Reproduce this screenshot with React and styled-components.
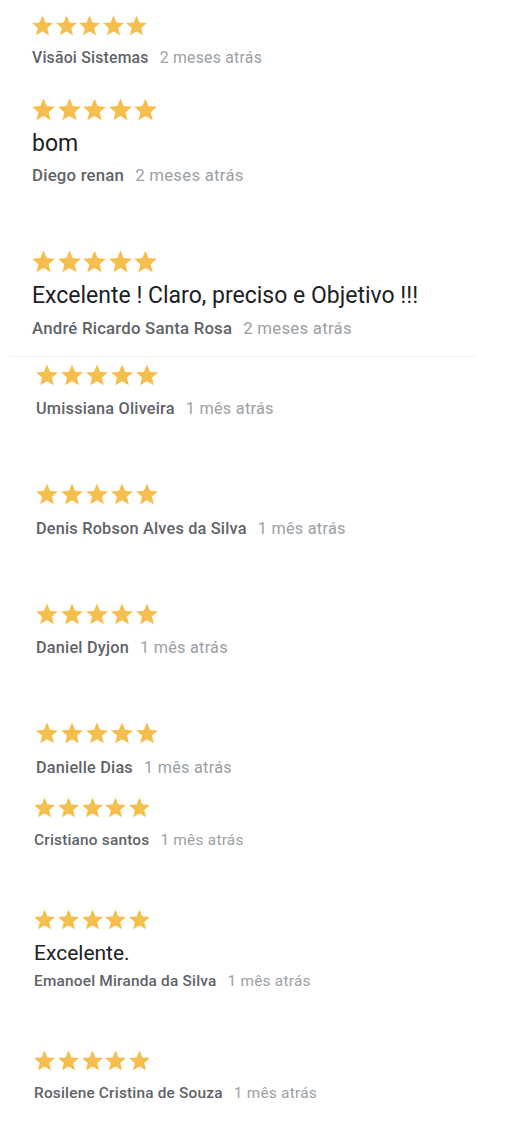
import React from "react";
import styled, { createGlobalStyle } from "styled-components";

const GlobalStyle = createGlobalStyle`
  html, body {
    margin: 0;
    padding: 0;
    background: #ffffff;
  }
  body {
    font-family: Roboto, "Liberation Sans", Arial, sans-serif;
    -webkit-font-smoothing: antialiased;
  }
`;

const reviews = [
  { name: "Visãoi Sistemas", time: "2 meses atrás", indent: 32, star: 21, gap: 2.5, mt: 15, nameSize: 15.8, nameMt: 11.5 },
  { name: "Diego renan", time: "2 meses atrás", text: "bom", indent: 32, star: 23, gap: 2.5, mt: 30.5, textSize: 23, textLh: 28, textMt: 9, nameSize: 16.8, nameMt: 7.2 },
  { name: "André Ricardo Santa Rosa", time: "2 meses atrás", text: "Excelente ! Claro, preciso e Objetivo !!!", indent: 32, star: 23, gap: 2.5, mt: 65, textSize: 23, textLh: 28, textMt: 8.8, nameSize: 16.8, nameMt: 8, divider: true },
  { name: "Umissiana Oliveira", time: "1 mês atrás", indent: 36, star: 22, gap: 3, mt: 7, nameSize: 16.3, nameMt: 13.5 },
  { name: "Denis Robson Alves da Silva", time: "1 mês atrás", indent: 36, star: 22, gap: 3, mt: 64, nameSize: 16.3, nameMt: 13.5 },
  { name: "Daniel Dyjon", time: "1 mês atrás", indent: 36, star: 22, gap: 3, mt: 64, nameSize: 16.3, nameMt: 13.5 },
  { name: "Danielle Dias", time: "1 mês atrás", indent: 36, star: 22, gap: 3, mt: 64, nameSize: 16.3, nameMt: 13.5 },
  { name: "Cristiano santos", time: "1 mês atrás", indent: 34, star: 21, gap: 2.75, mt: 19.5, nameSize: 15.4, nameMt: 11.3 },
  { name: "Emanoel Miranda da Silva", time: "1 mês atrás", text: "Excelente.", indent: 34, star: 21, gap: 2.75, mt: 59.5, textSize: 21, textLh: 26, textMt: 9.5, nameSize: 15.4, nameMt: 5.5 },
  { name: "Rosilene Cristina de Souza", time: "1 mês atrás", indent: 34, star: 21, gap: 2.75, mt: 58.5, nameSize: 15.4, nameMt: 11.8 },
];

const Page = styled.div`
  display: flex;
  flex-direction: column;
  width: 526px;
  height: 1125px;
  overflow: hidden;
  background: #ffffff;
`;

const Review = styled.div`
  display: flex;
  flex-direction: column;
  align-items: flex-start;
  padding-left: ${(p) => p.$indent}px;
  margin-top: ${(p) => p.$mt}px;
`;

const Stars = styled.div`
  display: flex;
  gap: ${(p) => p.$gap}px;
  height: ${(p) => p.$size}px;
`;

const ReviewText = styled.div`
  margin-top: ${(p) => p.$mt}px;
  font-size: ${(p) => p.$size}px;
  line-height: ${(p) => p.$lh}px;
  color: #202124;
  white-space: nowrap;
`;

const Meta = styled.div`
  display: flex;
  align-items: baseline;
  margin-top: ${(p) => p.$mt}px;
  font-size: ${(p) => p.$size}px;
  line-height: 20px;
  white-space: nowrap;
`;

const Author = styled.span`
  font-weight: 500;
  letter-spacing: 0.2px;
  color: #5f6368;
`;

const When = styled.span`
  margin-left: 11px;
  letter-spacing: 0.25px;
  color: #9aa0a6;
`;

const Divider = styled.div`
  margin: 18px 0 0 10px;
  width: 467px;
  height: 1px;
  background: #f3f3f3;
`;

const Star = ({ size }) => (
  <svg width={size} height={size} viewBox="2 1.6 20 20" fill="#f4bf4f">
    <path d="M12 17.27L18.18 21l-1.64-7.03L22 9.24l-7.19-.61L12 2 9.19 8.63 2 9.24l5.46 4.73L5.82 21z" />
  </svg>
);

const ReviewItem = ({ r }) => (
  <Review $indent={r.indent} $mt={r.mt}>
    <Stars $gap={r.gap} $size={r.star}>
      {[0, 1, 2, 3, 4].map((i) => (
        <Star key={i} size={r.star} />
      ))}
    </Stars>
    {r.text && (
      <ReviewText $mt={r.textMt} $size={r.textSize} $lh={r.textLh}>
        {r.text}
      </ReviewText>
    )}
    <Meta $mt={r.nameMt} $size={r.nameSize}>
      <Author>{r.name}</Author>
      <When>{r.time}</When>
    </Meta>
  </Review>
);

export default function App() {
  return (
    <>
      <GlobalStyle />
      <Page>
        {reviews.map((r) => (
          <React.Fragment key={r.name}>
            <ReviewItem r={r} />
            {r.divider && <Divider />}
          </React.Fragment>
        ))}
      </Page>
    </>
  );
}
